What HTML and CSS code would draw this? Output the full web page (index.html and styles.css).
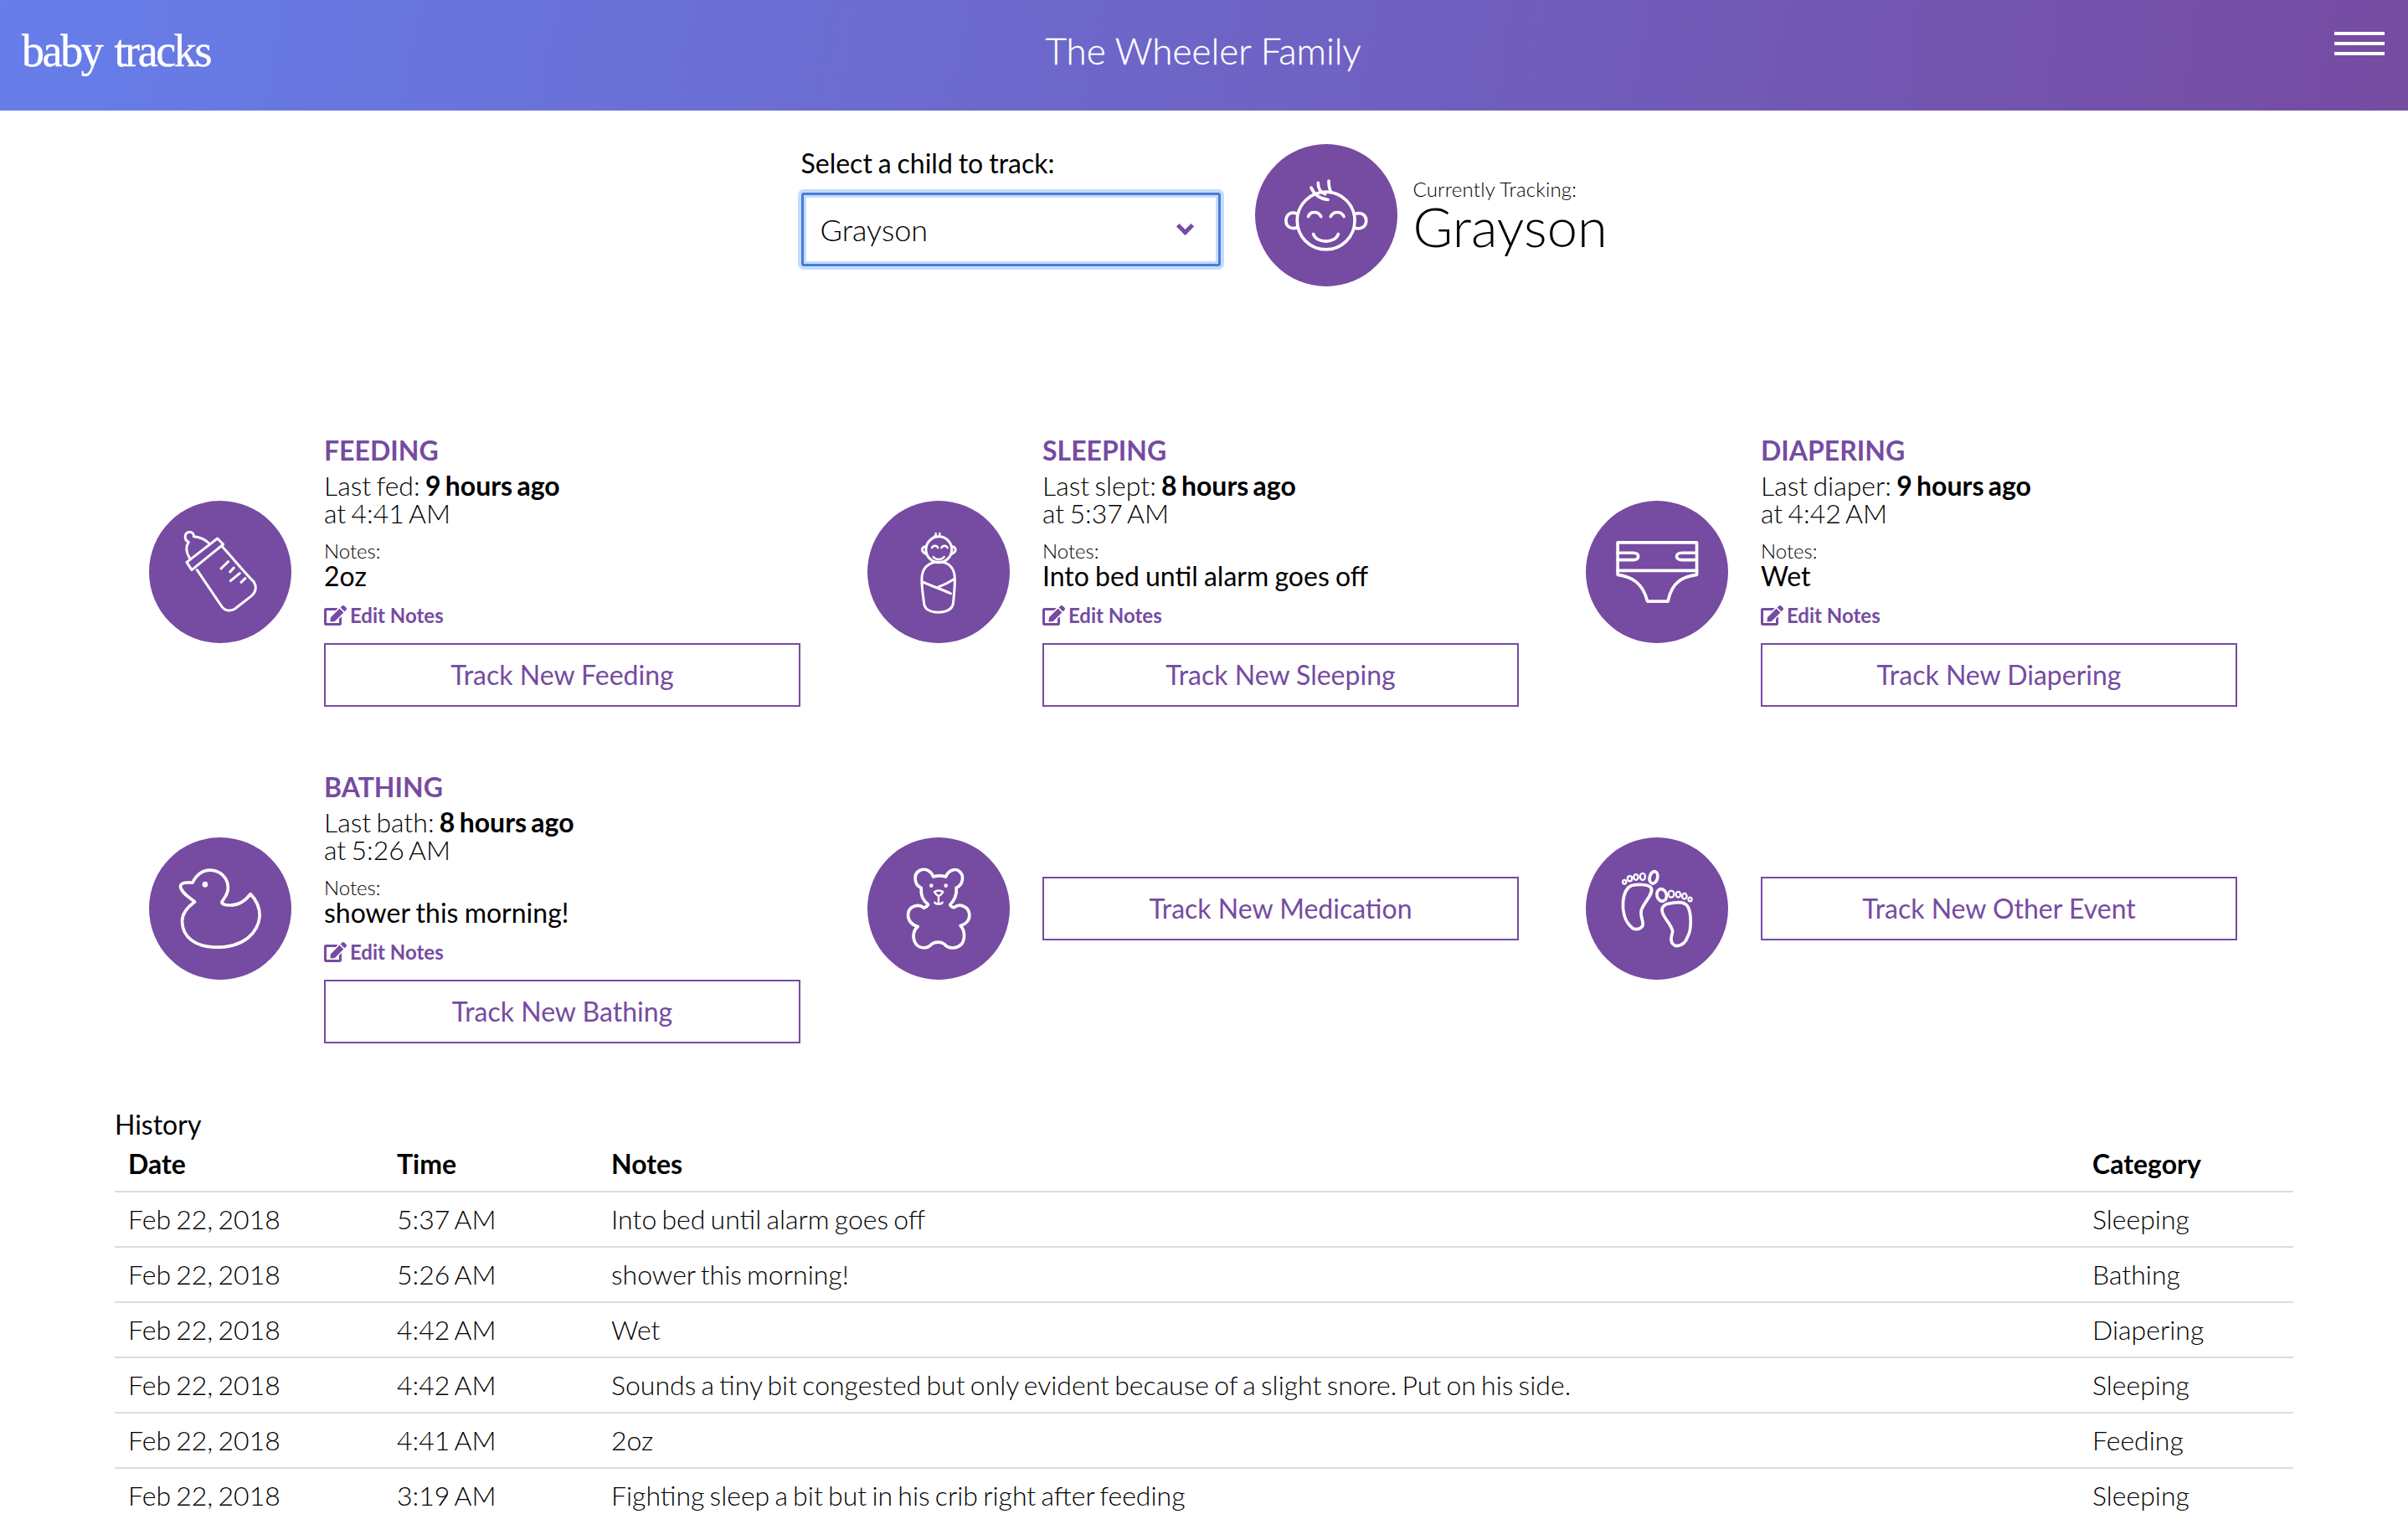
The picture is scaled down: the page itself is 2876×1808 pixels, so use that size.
FILE: index.html
```html
<!DOCTYPE html>
<html lang="en">
<head>
    <meta charset="UTF-8">
    <title>baby tracks</title>
    <link rel="stylesheet" href="styles.css">
</head>
<body>
<svg class="defs" width="0" height="0">
    <symbol id="edit" viewBox="0 0 576 512">
        <path d="M402.6 83.2l90.2 90.2c3.8 3.8 3.8 10 0 13.8L274.4 405.6l-92.8 10.3c-12.4 1.4-22.9-9.1-21.5-21.5l10.3-92.8L388.8 83.2c3.8-3.8 10-3.8 13.8 0zm162-22.9l-48.8-48.8c-15.2-15.2-39.9-15.2-55.2 0l-35.4 35.4c-3.8 3.8-3.8 10 0 13.8l90.2 90.2c3.8 3.8 10 3.8 13.8 0l35.4-35.4c15.2-15.3 15.2-40 0-55.2zM384 346.2V448H64V128h229.8c3.2 0 6.2-1.3 8.5-3.5l40-40c7.6-7.6 2.2-20.5-8.5-20.5H48C21.5 64 0 85.5 0 112v352c0 26.5 21.5 48 48 48h352c26.5 0 48-21.5 48-48V306.2c0-10.7-12.9-16-20.5-8.5l-40 40c-2.2 2.3-3.5 5.3-3.5 8.5z"/>
    </symbol>
</svg>

<header class="topbar">
    <a class="logo" href="#">baby tracks</a>
    <div class="family">The Wheeler Family</div>
    <div class="burger"><span></span><span></span><span></span></div>
</header>

<section class="picker">
    <div class="picker-field">
        <label class="picker-label" for="child">Select a child to track:</label>
        <div class="select-wrap">
            <select id="child" class="select-box">
                <option>Grayson</option>
            </select>
        </div>
    </div>
    <div class="circle">
        <svg viewBox="55 66 508 509">
            <circle cx="308" cy="340" r="103"/>
            <path d="M205 315C178 305 165 322 165 340C165 360 180 372 205 365"/>
            <path d="M412 315C440 308 452 324 452 340C452 360 435 372 412 367"/>
            <path d="M245 325C252 305 280 305 290 325"/>
            <path d="M325 325C335 305 362 305 372 325"/>
            <path d="M263 388C275 422 340 422 352 388"/>
            <path d="M255 222C265 245 285 262 315 265"/>
            <path d="M280 205C280 225 290 240 305 245"/>
            <path d="M318 198C318 215 320 230 328 240"/>
        </svg>
    </div>
    <div class="tracking">
        <div class="tracking-label">Currently Tracking:</div>
        <div class="tracking-name">Grayson</div>
    </div>
</section>

<section class="events">
    <div class="event">
        <div class="circle">
            <svg class="bottle" viewBox="0 0 510 510">
                <path d="M135 220L245 135L266 156L153 248Z"/>
                <path d="M145 205C133 185 130 165 142 148C125 140 125 115 145 112C155 112 162 120 160 128C180 128 205 140 218 156"/>
                <path d="M172 248L258 375C270 395 290 398 308 387L368 340C385 325 385 305 375 290C340 255 300 205 263 165"/>
                <path d="M258 243L284 218M290 255L304 240M292 287L325 260M330 292L345 278"/>
            </svg>
        </div>
        <div class="event-body">
            <h3 class="event-title">FEEDING</h3>
            <div class="event-last">Last fed: <strong>9 hours ago</strong></div>
            <div class="event-last">at 4:41 AM</div>
            <div class="event-notes-label">Notes:</div>
            <div class="event-notes">2oz</div>
            <a class="edit-link" href="#"><svg class="edit-icon"><use href="#edit"/></svg>Edit Notes</a>
            <a class="track-btn" href="#">Track New Feeding</a>
        </div>
    </div>

    <div class="event">
        <div class="circle">
            <svg class="swaddle" viewBox="48 54 508 508">
                <circle cx="303" cy="228" r="46"/>
                <path d="M258 218C242 215 236 235 258 244"/>
                <path d="M348 218C364 215 370 235 348 244"/>
                <path class="thin" d="M278 222C283 212 295 212 300 222"/>
                <path class="thin" d="M312 222C317 212 329 212 334 222"/>
                <path class="thin" d="M283 254C292 266 312 266 322 254"/>
                <path class="thin" d="M280 190L288 180M292 182V170M306 182V170"/>
                <path d="M303 272C260 272 242 300 242 335C242 370 248 400 250 420C252 440 270 452 300 452C330 452 352 440 354 420C356 400 360 370 360 335C360 300 345 272 303 272Z"/>
                <path d="M248 345C280 360 320 372 345 385"/>
                <path d="M355 335C340 345 320 355 300 362"/>
            </svg>
        </div>
        <div class="event-body">
            <h3 class="event-title">SLEEPING</h3>
            <div class="event-last">Last slept: <strong>8 hours ago</strong></div>
            <div class="event-last">at 5:37 AM</div>
            <div class="event-notes-label">Notes:</div>
            <div class="event-notes">Into bed until alarm goes off</div>
            <a class="edit-link" href="#"><svg class="edit-icon"><use href="#edit"/></svg>Edit Notes</a>
            <a class="track-btn" href="#">Track New Sleeping</a>
        </div>
    </div>

    <div class="event">
        <div class="circle">
            <svg viewBox="42 54 508 508">
                <path d="M156 203H438V318C390 325 350 340 335 413H262C245 345 205 325 156 318Z"/>
                <path d="M156 303H438"/>
                <path d="M156 240H212C235 240 235 265 212 265H156"/>
                <path d="M438 240H385C360 240 360 265 385 265H438"/>
            </svg>
        </div>
        <div class="event-body">
            <h3 class="event-title">DIAPERING</h3>
            <div class="event-last">Last diaper: <strong>9 hours ago</strong></div>
            <div class="event-last">at 4:42 AM</div>
            <div class="event-notes-label">Notes:</div>
            <div class="event-notes">Wet</div>
            <a class="edit-link" href="#"><svg class="edit-icon"><use href="#edit"/></svg>Edit Notes</a>
            <a class="track-btn" href="#">Track New Diapering</a>
        </div>
    </div>

    <div class="event">
        <div class="circle">
            <svg viewBox="55 60 508 508">
                <path d="M210 222C225 190 250 175 275 177C310 178 337 205 337 240C337 262 325 275 316 288C312 298 325 302 345 302C375 302 400 285 417 262C440 285 450 310 450 340C445 400 395 452 295 452C225 452 175 420 173 360C173 330 190 310 218 290C205 278 170 260 167 235C167 220 195 220 210 222Z"/>
                <circle class="solid" cx="255" cy="228" r="10"/>
            </svg>
        </div>
        <div class="event-body">
            <h3 class="event-title">BATHING</h3>
            <div class="event-last">Last bath: <strong>8 hours ago</strong></div>
            <div class="event-last">at 5:26 AM</div>
            <div class="event-notes-label">Notes:</div>
            <div class="event-notes">shower this morning!</div>
            <a class="edit-link" href="#"><svg class="edit-icon"><use href="#edit"/></svg>Edit Notes</a>
            <a class="track-btn" href="#">Track New Bathing</a>
        </div>
    </div>

    <div class="event">
        <div class="circle">
            <svg viewBox="48 60 508 508">
                <path d="M240 240C215 230 210 190 235 178C255 168 275 180 283 200C295 197 315 197 328 200C335 180 360 168 375 180C395 195 390 230 365 240C368 260 360 285 343 300C345 305 352 310 358 310C375 295 410 305 412 335C414 355 400 370 380 375C395 390 398 420 385 440C365 460 335 458 322 440C310 432 290 432 278 440C260 460 230 458 218 435C208 415 212 390 228 378C205 372 192 355 193 335C195 305 230 295 250 312C255 310 262 305 265 300C245 285 238 262 240 240Z"/>
                <circle class="solid" cx="276" cy="232" r="7"/>
                <circle class="solid" cx="328" cy="232" r="7"/>
                <path class="thin" d="M287 255C295 248 310 248 318 255C312 265 306 268 302 270C298 268 292 262 287 255Z"/>
                <path class="thin" d="M302 272V296M288 292C292 300 312 300 316 292"/>
            </svg>
        </div>
        <div class="event-body">
            <a class="track-btn" href="#">Track New Medication</a>
        </div>
    </div>

    <div class="event">
        <div class="circle">
            <svg viewBox="42 60 508 508">
                <path d="M205 232C230 225 265 228 275 240C285 262 250 290 240 320C235 345 250 360 245 375C235 390 215 392 205 380C180 360 172 320 175 290C178 260 185 240 205 232Z"/>
                <ellipse cx="284" cy="203" rx="14" ry="22" transform="rotate(15 284 203)"/>
                <ellipse class="thin" cx="245" cy="200" rx="9" ry="12"/>
                <ellipse class="thin" cx="221" cy="202" rx="8" ry="10"/>
                <ellipse class="thin" cx="199" cy="207" rx="8" ry="9"/>
                <ellipse class="thin" cx="180" cy="219" rx="6" ry="7"/>
                <path d="M335 297C365 290 395 290 405 305C420 330 420 390 405 415C395 445 365 455 352 440C340 425 350 410 352 395C345 365 315 345 314 320C314 305 325 300 335 297Z"/>
                <ellipse cx="313" cy="266" rx="17" ry="22" transform="rotate(-15 313 266)"/>
                <ellipse class="thin" cx="347" cy="262" rx="10" ry="12"/>
                <ellipse class="thin" cx="372" cy="264" rx="8" ry="10"/>
                <ellipse class="thin" cx="394" cy="270" rx="8" ry="10"/>
                <ellipse class="thin" cx="414" cy="281" rx="6" ry="7"/>
            </svg>
        </div>
        <div class="event-body">
            <a class="track-btn" href="#">Track New Other Event</a>
        </div>
    </div>
</section>

<section class="history">
    <div class="history-title">History</div>
    <table class="history-table">
        <thead>
            <tr><th class="col-date">Date</th><th class="col-time">Time</th><th>Notes</th><th class="col-cat">Category</th></tr>
        </thead>
        <tbody>
            <tr><td>Feb 22, 2018</td><td>5:37 AM</td><td>Into bed until alarm goes off</td><td>Sleeping</td></tr>
            <tr><td>Feb 22, 2018</td><td>5:26 AM</td><td>shower this morning!</td><td>Bathing</td></tr>
            <tr><td>Feb 22, 2018</td><td>4:42 AM</td><td>Wet</td><td>Diapering</td></tr>
            <tr><td>Feb 22, 2018</td><td>4:42 AM</td><td>Sounds a tiny bit congested but only evident because of a slight snore. Put on his side.</td><td>Sleeping</td></tr>
            <tr><td>Feb 22, 2018</td><td>4:41 AM</td><td>2oz</td><td>Feeding</td></tr>
            <tr><td>Feb 22, 2018</td><td>3:19 AM</td><td>Fighting sleep a bit but in his crib right after feeding</td><td>Sleeping</td></tr>
        </tbody>
    </table>
</section>
</body>
</html>
```

FILE: styles.css
```css
*{
    box-sizing: border-box;
    margin: 0;
    padding: 0;
}
html,body{
    background: #fff;
    overflow: hidden;
    height: 100%;
}
body{
    font-family: "Lato", sans-serif;
    font-size: 32px;
    font-weight: 300;
    word-spacing: -2.5px;
    color: #000;
}
a{
    text-decoration: none;
    color: #764ba2;
}
.defs{
    position: absolute;
}

/* top bar */
.topbar{
    display: grid;
    grid-template-columns: 1fr auto 1fr;
    align-items: center;
    height: 132px;
    padding: 0 28px 10px 26px;
    background: linear-gradient(100deg, #667eea, #764ba2);
    color: #fff;
    word-spacing: 0;
}
.logo{
    font-family: "Liberation Serif", serif;
    font-size: 54px;
    font-weight: 400;
    letter-spacing: -2.4px;
    word-spacing: 4px;
    -webkit-text-stroke: 0.4px #fff;
    color: #fff;
}
.family{
    font-size: 44px;
    font-weight: 300;
    -webkit-text-stroke: 0.3px #fff;
    margin-bottom: 3px;
}
.burger{
    justify-self: end;
    align-self: start;
    display: flex;
    flex-direction: column;
    gap: 8px;
    width: 60px;
    margin-top: 38px;
}
.burger span{
    height: 4px;
    background: #fff;
}

/* child picker */
.picker{
    display: flex;
    align-items: flex-start;
    justify-content: center;
    padding: 40px 0 0;
    height: 212px;
}
.picker-field{
    width: 501px;
    margin: 3px 41px 0 0;
}
.picker-label{
    display: block;
    font-weight: 400;
    line-height: 40px;
    margin-bottom: 15px;
    word-spacing: -1.3px;
}
.select-wrap{
    position: relative;
}
.select-wrap::after{
    content: "";
    position: absolute;
    right: 35px;
    top: 33px;
    width: 10px;
    height: 10px;
    border-left: 5px solid #764ba2;
    border-bottom: 5px solid #764ba2;
    transform: rotate(-45deg);
}
.select-box{
    display: block;
    width: 100%;
    height: 88px;
    padding: 0 20px;
    appearance: none;
    background: #fff;
    border: 3px solid #4a7bdc;
    border-radius: 3px;
    box-shadow: 0 0 0 4px #c5dcfb, inset 0 0 0 3px #c5dcfb;
    font-family: "Lato", sans-serif;
    font-size: 36px;
    font-weight: 300;
    color: #000;
    outline: none;
}
.circle{
    flex: none;
    width: 170px;
    height: 170px;
    border-radius: 50%;
    background: #764ba2;
}
.circle svg{
    display: block;
    width: 170px;
    height: 170px;
    fill: none;
    stroke: #fff;
    stroke-width: 11;
    stroke-linecap: round;
    stroke-linejoin: round;
}
.circle .bottle,
.circle .swaddle{
    stroke-width: 9;
}
.circle .solid{
    fill: #fff;
    stroke: none;
}
.circle .thin{
    stroke-width: 7;
}
.tracking{
    align-self: center;
    margin-left: 19px;
    width: 232px;
}
.tracking-label{
    font-size: 24px;
    line-height: 30px;
    letter-spacing: 0.2px;
    word-spacing: 0;
}
.tracking-name{
    font-size: 65px;
    line-height: 64px;
    margin: -3px 0 3px;
}

/* event cards */
.events{
    display: grid;
    grid-template-columns: repeat(3, 858px);
    grid-auto-rows: 402px;
    margin-top: 177px;
    padding-left: 178px;
}
.event{
    display: flex;
    align-items: center;
    height: 323px;
}
.event-body{
    width: 569px;
    margin-left: 39px;
}
.event-title{
    font-size: 32px;
    font-weight: 700;
    line-height: 33px;
    margin-bottom: 9px;
    color: #764ba2;
}
.event-last{
    line-height: 33px;
}
.event-last strong{
    font-weight: 700;
}
.event-notes-label{
    font-size: 24px;
    line-height: 26px;
    margin-top: 16px;
}
.event-notes{
    font-weight: 400;
    line-height: 33px;
    word-spacing: -1px;
}
.edit-link{
    display: flex;
    align-items: center;
    gap: 4px;
    font-size: 24px;
    font-weight: 700;
    line-height: 30px;
    word-spacing: 0;
    margin: 16px 0 18px;
}
.edit-icon{
    width: 27px;
    height: 24px;
    fill: #764ba2;
}
.track-btn{
    display: block;
    height: 76px;
    border: 2px solid #764ba2;
    font-weight: 400;
    line-height: 72px;
    text-align: center;
    word-spacing: 0;
}

/* history table */
.history{
    padding: 0 137px;
    margin-top: 3px;
}
.history-title{
    line-height: 30px;
    font-weight: 400;
}
.history-table{
    width: 100%;
    border-collapse: collapse;
    table-layout: fixed;
}
.history-table th,
.history-table td{
    padding: 8px 16px;
    line-height: 48px;
    text-align: left;
    border-bottom: 2px solid #dbdbdb;
    white-space: nowrap;
}
.history-table th{
    font-weight: 700;
}
.col-date{
    width: 321px;
}
.col-time{
    width: 256px;
}
.col-cat{
    width: 256px;
}
```
